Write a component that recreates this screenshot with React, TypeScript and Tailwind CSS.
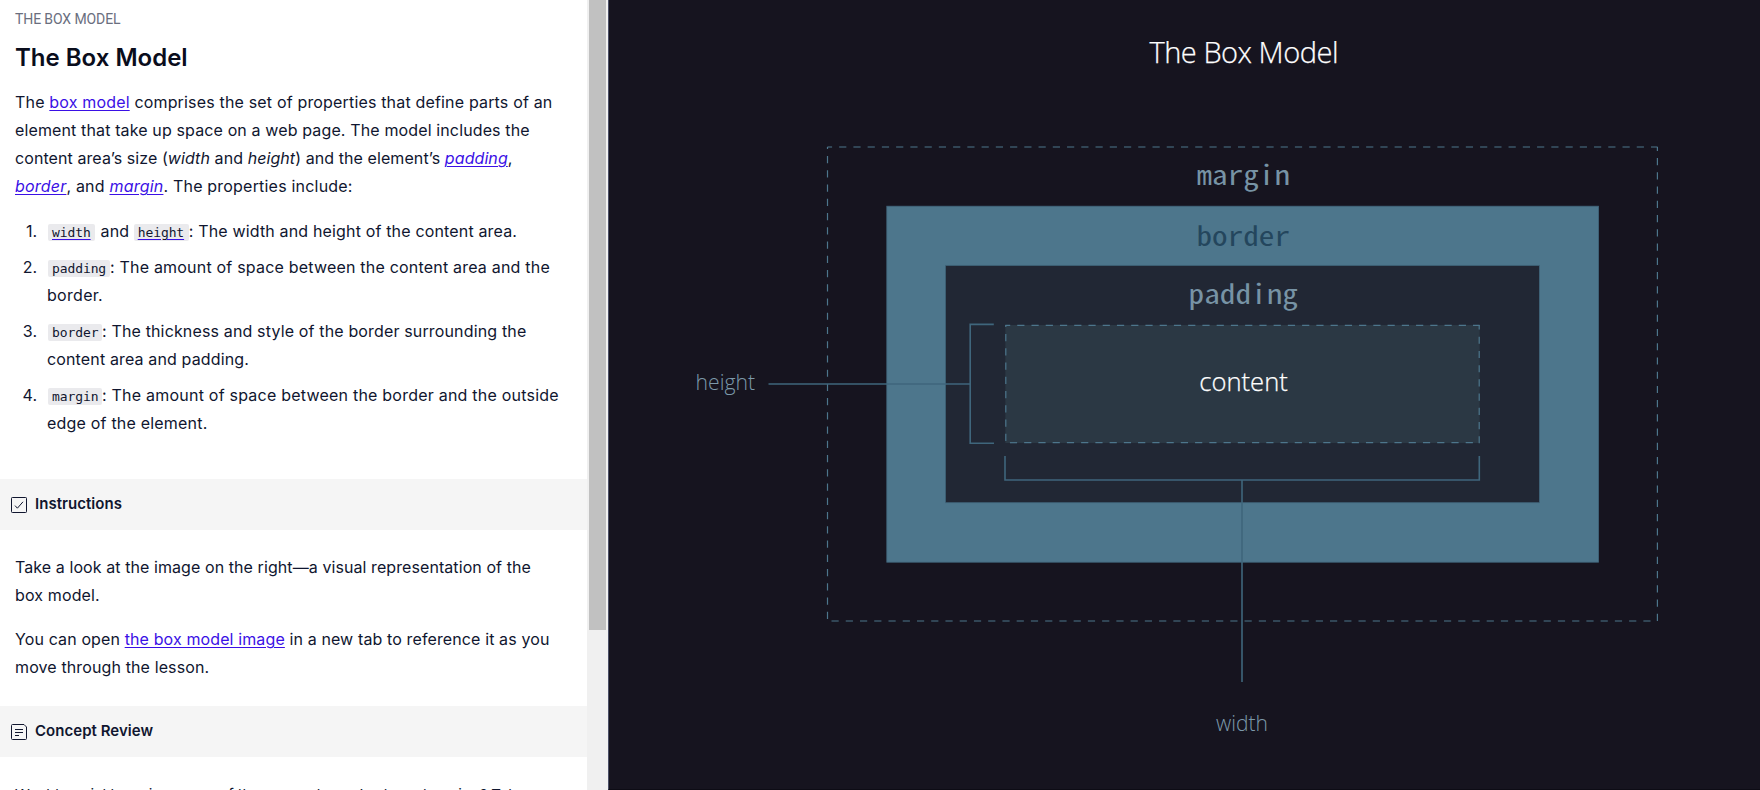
import type { ReactNode } from "react";

function Line({ children, className = "" }: { children: ReactNode; className?: string }) {
  return <span className={`block whitespace-nowrap ${className}`}>{children}</span>;
}

function Link({ children, className = "" }: { children: ReactNode; className?: string }) {
  return (
    <a href="#" className={`text-[#3a10e5] underline decoration-1 underline-offset-2 ${className}`}>
      {children}
    </a>
  );
}

function Code({ children, className = "" }: { children: ReactNode; className?: string }) {
  return (
    <code
      className={`ml-px inline-block h-[17px] rounded-xs bg-[#eaeaed] pl-1 text-[13px] leading-[17px] tracking-[-0.1px] font-['DejaVu_Sans_Mono',monospace] ${className}`}
    >
      {children}
    </code>
  );
}

function SectionBar({ icon, children }: { icon: ReactNode; children: ReactNode }) {
  return (
    <div className="flex h-[51px] items-center gap-2 bg-[#f5f5f5] pl-[11px]">
      {icon}
      <h2 className="pb-0.5 text-[15px] leading-6 font-semibold tracking-[0.04px]">{children}</h2>
    </div>
  );
}

function CheckIcon() {
  return (
    <svg width="16" height="16" viewBox="0 0 16 16" fill="none" stroke="#10162f" className="shrink-0">
      <rect x="0.5" y="0.5" width="15" height="15" rx="0.8" />
      <path d="M4 8.6l2.4 2.6L12 4.8" />
    </svg>
  );
}

function NoteIcon() {
  return (
    <svg width="16" height="16" viewBox="0 0 16 16" fill="none" stroke="#10162f" className="shrink-0">
      <path d="M1.5 0.5h11.5l2.5 2.5v11.5a1 1 0 0 1-1 1h-13a1 1 0 0 1-1-1v-13a1 1 0 0 1 1-1z" />
      <path d="M4 5.5h8M4 8.5h8M4 11.5h4" />
    </svg>
  );
}

function Item({ n, children }: { n: number; children: ReactNode }) {
  return (
    <li className="flex">
      <span className="w-[23px] shrink-0 text-right">{n}.</span>
      <div className="pl-[10px]">{children}</div>
    </li>
  );
}

function Diagram() {
  return (
    <svg width="1151" height="789" viewBox="609 0 1151 789" className="block">
      <text x="1149.5" y="63" textLength="189" fontSize="29" fill="#fff" stroke="#fff" strokeWidth="0.25" className="font-light font-['Open_Sans',sans-serif]">The Box Model</text>

      <g stroke="#40647a" strokeWidth="0.8">
        <rect x="886.8" y="206.2" width="711.8" height="356" fill="#4d768c" />
        <rect x="945.4" y="265.4" width="594" height="237.3" fill="#212734" />
      </g>
      <rect x="1005.3" y="325" width="474.4" height="118" fill="#2b3844" />

      <g stroke="#4d768c" strokeWidth="1.2" strokeDasharray="7.2 7.043" fill="none">
        <path d="M827.4 147H1657.6" strokeDashoffset="2.5" />
        <path d="M827.5 147V620" strokeDashoffset="5.25" />
        <path d="M831.5 621H1657" />
        <path d="M1657.4 147V621.5" strokeDashoffset="3.25" />
        <path d="M1005.4 325.3H1479.6" strokeDashoffset="2.4" />
        <path d="M1005.8 325V442" strokeDashoffset="5.25" />
        <path d="M1009.9 442.7H1479" />
        <path d="M1479.2 325V443.3" strokeDashoffset="2.6" />
      </g>

      <g stroke="#3f667c" strokeWidth="1.6" fill="none">
        <path d="M993.8 324.4H970.2V443.3H994" />
        <path d="M768.5 384H970" />
        <path d="M1005 456V480H1479.3V456" />
        <path d="M1242 480V682" />
      </g>

      <g fontSize="27.5" className="font-['Noto_Sans_Mono_CJK_SC',monospace]">
        <text x="1196.5" y="185" textLength="93.5" lengthAdjust="spacingAndGlyphs" fill="#7793a5">margin</text>
        <text x="1196.5" y="245.7" textLength="93.5" lengthAdjust="spacingAndGlyphs" fill="#24465d">border</text>
        <text x="1188.5" y="303.7" textLength="109.5" lengthAdjust="spacingAndGlyphs" fill="#7793a5">padding</text>
      </g>
      <g className="font-light font-['Open_Sans',sans-serif]">
        <text x="1199.3" y="391" textLength="88.5" lengthAdjust="spacingAndGlyphs" fontSize="26" fill="#fff" stroke="#fff" strokeWidth="0.25">content</text>
        <text x="695.5" y="389.7" textLength="59.5" lengthAdjust="spacingAndGlyphs" fontSize="22" fill="#7c99aa">height</text>
        <text x="1216" y="730.7" textLength="52" lengthAdjust="spacingAndGlyphs" fontSize="22" fill="#7c99aa">width</text>
      </g>
    </svg>
  );
}

export default function App() {
  return (
    <div className="flex h-[790px] w-[1760px] overflow-hidden bg-white text-[16px] leading-7 text-[#10162f] font-['Inter',sans-serif]">
      <main className="h-full w-[587px] shrink-0 overflow-hidden">
        <section className="h-[479px] px-[15px] pt-[9px]">
          <p className="text-[14px] leading-5 tracking-[-0.1px] text-[#6a6e7e] font-['Roboto',sans-serif]">THE BOX MODEL</p>
          <h1 className="mt-[13px] text-[24px] leading-8 font-semibold text-[#0a0d1c]">The Box Model</h1>
          <p className="mt-[14px]">
            <Line className="tracking-[0.17px]">The <Link>box model</Link> comprises the set of properties that define parts of an</Line>
            <Line className="tracking-[0.13px]">element that take up space on a web page. The model includes the</Line>
            <Line className="tracking-[0.08px]">content area’s size (<em>width</em> and <em>height</em>) and the element’s <Link className="italic">padding</Link>,</Line>
            <Line className="tracking-[0.2px]"><Link className="italic">border</Link>, and <Link className="italic">margin</Link>. The properties include:</Line>
          </p>
          <ol className="mt-[17px] -ml-px flex flex-col gap-2">
            <Item n={1}>
              <Line className="tracking-[0.16px]"><Link><Code className="w-[47px] text-[#10162f] underline decoration-[#3a10e5]">width</Code></Link><span className="pr-[3.5px] pl-[5.5px]">and</span><Link><Code className="w-[55px] text-[#10162f] underline decoration-[#3a10e5]">height</Code></Link>: The width and height of the content area.</Line>
            </Item>
            <Item n={2}>
              <Line className="tracking-[0.2px]"><Code className="w-[62px]">padding</Code>: The amount of space between the content area and the</Line>
              <Line className="tracking-[0.3px]">border.</Line>
            </Item>
            <Item n={3}>
              <Line className="tracking-[0.15px]"><Code className="w-[54px]">border</Code>: The thickness and style of the border surrounding the</Line>
              <Line className="tracking-[0.14px]">content area and padding.</Line>
            </Item>
            <Item n={4}>
              <Line className="tracking-[0.22px]"><Code className="w-[54px]">margin</Code>: The amount of space between the border and the outside</Line>
              <Line className="tracking-[0.2px]">edge of the element.</Line>
            </Item>
          </ol>
        </section>

        <SectionBar icon={<CheckIcon />}>Instructions</SectionBar>
        <section className="flex h-[176px] flex-col gap-4 px-[15px] pt-[23px]">
          <p>
            <Line className="tracking-[0.08px]">Take a look at the image on the right—a visual representation of the</Line>
            <Line className="tracking-[0.13px]">box model.</Line>
          </p>
          <p>
            <Line className="tracking-[0.12px]">You can open <Link>the box model image</Link> in a new tab to reference it as you</Line>
            <Line className="tracking-[0.12px]">move through the lesson.</Line>
          </p>
        </section>

        <SectionBar icon={<NoteIcon />}>Concept Review</SectionBar>
        <section className="px-[15px] pt-[24px] text-[15px]">
          <Line className="tracking-[-0.1px]">Want to quickly review some of the concepts you’ve been learning? Take</Line>
        </section>
      </main>

      <div className="h-full w-[21px] shrink-0 bg-[#f0f0f0] pl-0.5">
        <div className="h-[630px] w-[17px] bg-[#c1c1c1]" />
      </div>

      <aside className="h-full w-[1152px] shrink-0 border-b border-l border-b-[#0d0c15] border-l-[#4b4f66] bg-[#16141f]">
        <Diagram />
      </aside>
    </div>
  );
}
